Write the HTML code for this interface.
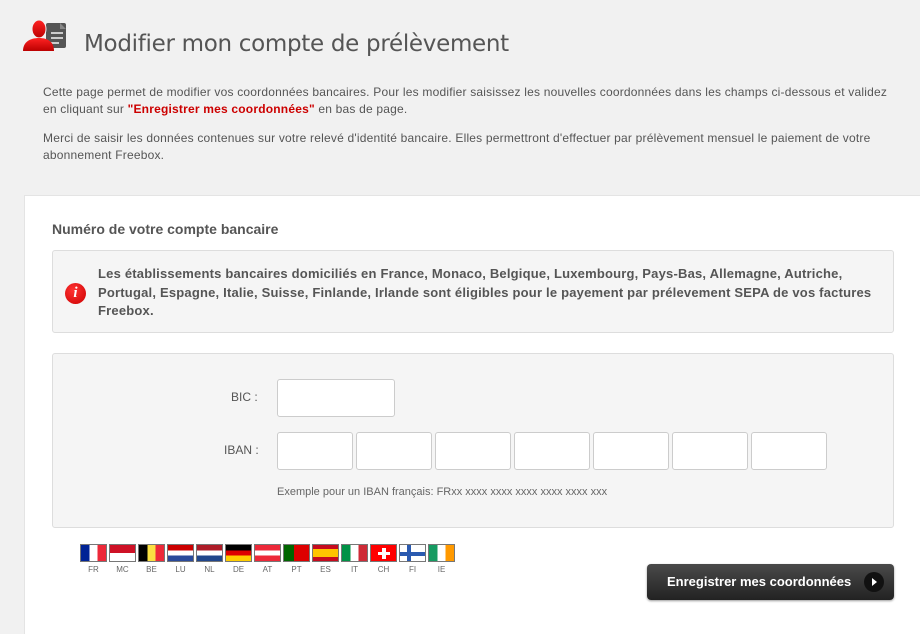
<!DOCTYPE html>
<html><head><meta charset="utf-8"><style>
*{margin:0;padding:0;box-sizing:border-box}
body{width:920px;height:634px;background:#f1f1f1;font-family:"Liberation Sans",Arial,sans-serif;position:relative;overflow:hidden;color:#555}
.abs{position:absolute}
h1{position:absolute;left:84px;top:31px;font-family:"DejaVu Sans","Liberation Sans",sans-serif;font-weight:normal;font-size:23px;color:#555;letter-spacing:-0.3px}
p.t{position:absolute;left:43px;font-size:12px;line-height:17px;color:#555;width:875px;letter-spacing:0.2px}
p.t b{color:#c00}
.panel{position:absolute;left:24px;top:195px;width:896px;height:439px;background:#fff;border-top:1px solid #e4e4e4;border-left:1px solid #e4e4e4}
h2{position:absolute;left:52px;top:221px;font-size:14px;font-weight:bold;color:#555}
.info{position:absolute;left:52px;top:250px;width:842px;height:83px;background:#f5f5f5;border:1px solid #ddd;border-radius:3px}
.info p{position:absolute;left:45px;top:14px;font-size:13px;font-weight:bold;line-height:18.5px;color:#555;width:795px;letter-spacing:0.2px}
.ic{position:absolute;left:12px;top:32px;width:21px;height:21px;border-radius:50%;background:radial-gradient(circle at 40% 35%,#f33,#c00);color:#fff;font:bold italic 15px "Liberation Serif",serif;text-align:center;line-height:21px}
.form{position:absolute;left:52px;top:353px;width:842px;height:175px;background:#f5f5f5;border:1px solid #ddd;border-radius:3px}
.lbl{position:absolute;font-size:12px;color:#555}
.in{position:absolute;width:76px;height:38px;background:#fff;border:1px solid #ccc;border-radius:3px}
.ex{position:absolute;left:277px;top:486px;font-size:11px;color:#666}
.flag{position:absolute;top:544px;width:27px;height:18px;border:1px solid #777;overflow:hidden}
.fl{position:absolute;top:565px;width:27px;text-align:center;font-size:8px;color:#666}
.btn{position:absolute;left:647px;top:564px;width:247px;height:36px;border-radius:4px;background:linear-gradient(#4a4a4a,#222);box-shadow:0 1px 2px rgba(0,0,0,.4);color:#fff;font-size:13px;font-weight:bold;line-height:36px;padding-left:20px}
.btn span{position:absolute;left:217px;top:8px;width:20px;height:20px;border-radius:50%;background:#111}
.btn span:after{content:"";position:absolute;left:8px;top:6px;border-left:5px solid #fff;border-top:4px solid transparent;border-bottom:4px solid transparent}
</style></head><body>
<svg class="abs" style="left:22px;top:18px" width="46" height="34" viewBox="0 0 46 34">
<defs><linearGradient id="r" x1="0" y1="0" x2="0" y2="1"><stop offset="0" stop-color="#f22"/><stop offset="1" stop-color="#b00"/></linearGradient></defs>
<rect x="24" y="5" width="20" height="25" rx="2" fill="#555"/>
<path d="M38 5 L44 11 L38 11Z" fill="#888"/>
<rect x="29" y="14" width="12" height="2" fill="#ccc"/><rect x="29" y="19" width="12" height="2" fill="#ccc"/><rect x="29" y="24" width="8" height="2" fill="#ccc"/>
<ellipse cx="17" cy="11" rx="7" ry="9" fill="url(#r)" stroke="#f1f1f1" stroke-width="1"/>
<path d="M1 33 C1 24 8 20 17 20 C26 20 32 24 32 33Z" fill="url(#r)"/>
</svg>
<h1>Modifier mon compte de prélèvement</h1>
<p class="t" style="top:84px">Cette page permet de modifier vos coordonnées bancaires. Pour les modifier saisissez les nouvelles coordonnées dans les champs ci-dessous et validez<br>en cliquant sur <b>"Enregistrer mes coordonnées"</b> en bas de page.</p>
<p class="t" style="top:130px">Merci de saisir les données contenues sur votre relevé d'identité bancaire. Elles permettront d'effectuer par prélèvement mensuel le paiement de votre<br>abonnement Freebox.</p>
<div class="panel"></div>
<h2>Numéro de votre compte bancaire</h2>
<div class="info"><div class="ic">i</div><p>Les établissements bancaires domiciliés en France, Monaco, Belgique, Luxembourg, Pays-Bas, Allemagne, Autriche,<br>Portugal, Espagne, Italie, Suisse, Finlande, Irlande sont éligibles pour le payement par prélevement SEPA de vos factures<br>Freebox.</p></div>
<div class="form"></div>
<div class="lbl" style="left:231px;top:390px">BIC :</div>
<div class="in" style="left:277px;top:379px;width:118px"></div>
<div class="lbl" style="left:224px;top:443px">IBAN :</div>
<div class="in" style="left:277px;top:432px"></div>
<div class="in" style="left:356px;top:432px"></div>
<div class="in" style="left:435px;top:432px"></div>
<div class="in" style="left:514px;top:432px"></div>
<div class="in" style="left:593px;top:432px"></div>
<div class="in" style="left:672px;top:432px"></div>
<div class="in" style="left:751px;top:432px"></div>
<div class="ex">Exemple pour un IBAN français: FRxx xxxx xxxx xxxx xxxx xxxx xxx</div>

<div class="flag" style="left:80px;background:linear-gradient(90deg,#002395 33%,#fff 33% 66%,#ed2939 66%)"></div>
<div class="flag" style="left:109px;background:linear-gradient(#ce1126 50%,#fff 50%)"></div>
<div class="flag" style="left:138px;background:linear-gradient(90deg,#000 33%,#fae042 33% 66%,#ed2939 66%)"></div>
<div class="flag" style="left:167px;background:linear-gradient(#c00 33%,#fff 33% 66%,#2a4a9a 66%)"></div>
<div class="flag" style="left:196px;background:linear-gradient(#ae1c28 33%,#fff 33% 66%,#21468b 66%)"></div>
<div class="flag" style="left:225px;background:linear-gradient(#000 33%,#d00 33% 66%,#ffce00 66%)"></div>
<div class="flag" style="left:254px;background:linear-gradient(#ed2939 33%,#fff 33% 66%,#ed2939 66%)"></div>
<div class="flag" style="left:283px;background:linear-gradient(90deg,#060 40%,#d00 40%)"></div>
<div class="flag" style="left:312px;background:linear-gradient(#c60b1e 25%,#ffc400 25% 75%,#c60b1e 75%)"></div>
<div class="flag" style="left:341px;background:linear-gradient(90deg,#009246 33%,#fff 33% 66%,#ce2b37 66%)"></div>
<div class="flag" style="left:370px;background:#f00"><div class="abs" style="left:11px;top:3px;width:4px;height:11px;background:#fff"></div><div class="abs" style="left:7px;top:7px;width:12px;height:3px;background:#fff"></div></div>
<div class="flag" style="left:399px;background:#fff"><div class="abs" style="left:7px;top:0;width:4px;height:18px;background:#2a5ab0"></div><div class="abs" style="left:0;top:7px;width:27px;height:4px;background:#2a5ab0"></div></div>
<div class="flag" style="left:428px;background:linear-gradient(90deg,#169b62 33%,#fff 33% 66%,#f90 66%)"></div>

<div class="fl" style="left:80px">FR</div><div class="fl" style="left:109px">MC</div><div class="fl" style="left:138px">BE</div><div class="fl" style="left:167px">LU</div><div class="fl" style="left:196px">NL</div><div class="fl" style="left:225px">DE</div><div class="fl" style="left:254px">AT</div><div class="fl" style="left:283px">PT</div><div class="fl" style="left:312px">ES</div><div class="fl" style="left:341px">IT</div><div class="fl" style="left:370px">CH</div><div class="fl" style="left:399px">FI</div><div class="fl" style="left:428px">IE</div>

<div class="btn">Enregistrer mes coordonnées<span></span></div>
</body></html>
